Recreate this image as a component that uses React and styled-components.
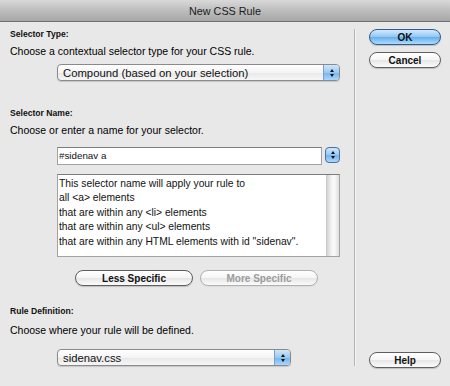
import React from "react"
import styled, { createGlobalStyle, css } from "styled-components"

const Global = createGlobalStyle`
	html, body {
		margin: 0;
		padding: 0;
		background: #e8e8e8;
	}
	body {
		font-family: "Liberation Sans", Arial, sans-serif;
		color: #000;
	}
`

const Window = styled.div`
	width: 450px;
	height: 386px;
	background: #e8e8e8;
	display: flex;
	flex-direction: column;
	overflow: hidden;
`

const TitleBar = styled.div`
	height: 21px;
	flex: none;
	background: linear-gradient(#d9d9d9, #bdbdbd 50%, #a7a7a7);
	border-bottom: 1px solid #707070;
	display: flex;
	align-items: center;
	justify-content: center;
	font-size: 10.8px;
	color: #1a1a1a;
`

const Body = styled.div`
	flex: 1;
	display: flex;
`

const Main = styled.div`
	width: 345px;
	padding: 6px 0 0 10px;
	box-sizing: border-box;
	display: flex;
	flex-direction: column;
`

const Label = styled.div`
	font-size: 8.6px;
	font-weight: bold;
	height: 12px;
	line-height: 12px;
	color: #111;
	margin-top: ${p => p.top || 0}px;
`

const Text = styled.div`
	font-size: 10.5px;
	height: 13px;
	line-height: 13px;
	margin-top: ${p => p.top || 0}px;
`

const Indented = styled.div`
	margin-left: 47px;
	width: ${p => p.w}px;
	margin-top: ${p => p.top || 0}px;
`

const PopUp = styled.div`
	height: 15px;
	border: 1px solid #8a8a8a;
	border-radius: 4px;
	background: linear-gradient(#ffffff, #f4f4f4 50%, #e8e8e8 51%, #f6f6f6);
	display: flex;
	align-items: center;
	box-shadow: 0 1px 1px rgba(0, 0, 0, 0.15);
	overflow: hidden;
`

const PopText = styled.span`
	flex: 1;
	padding-left: 5px;
	font-size: 11.3px;
	color: #111;
`

const Stepper = styled.span`
	width: 15px;
	align-self: stretch;
	background: linear-gradient(#cfe6fb, #97c9f3 50%, #72b3ef 51%, #acd6fb);
	border-left: 1px solid #7d9fc4;
	display: flex;
	flex-direction: column;
	align-items: center;
	justify-content: center;
	gap: 2px;
	${p => p.round && css`
		box-sizing: border-box;
		width: 15px;
		height: 16px;
		border: 1px solid #46729f;
		border-radius: 4px;
	`}
`

const Arrow = styled.span`
	width: 0;
	height: 0;
	border-left: 2.5px solid transparent;
	border-right: 2.5px solid transparent;
	${p => p.up
		? css`border-bottom: 3px solid #111;`
		: css`border-top: 3px solid #111;`}
`

const ComboRow = styled.div`
	display: flex;
	align-items: center;
	gap: 3px;
`

const Field = styled.div`
	flex: 1;
	height: 16px;
	border: 1px solid #a2a2a2;
	border-top-color: #7c7c7c;
	background: #fff;
	font-size: 9.8px;
	line-height: 16px;
	padding-left: 1px;
	color: #111;
`

const Area = styled.div`
	margin-top: 9px;
	height: 81px;
	border: 1px solid #a2a2a2;
	border-top-color: #7c7c7c;
	background: #fff;
	display: flex;
`

const AreaText = styled.div`
	flex: 1;
	padding: 2px 0 0 1px;
	font-size: 10.3px;
	line-height: 14.4px;
	white-space: pre;
	color: #111;
`

const ScrollTrack = styled.div`
	width: 12px;
	background: linear-gradient(90deg, #d4d4d4, #f4f4f4 40%, #fafafa 60%, #dedede);
	border-left: 1px solid #c8c8c8;
`

const ButtonRow = styled.div`
	display: flex;
	gap: 7px;
	margin: 13px 0 0 65px;
`

const Button = styled.div`
	width: ${p => p.w || 118}px;
	height: 16px;
	box-sizing: border-box;
	border: 1px solid ${p => (p.disabled ? "#b0b0b0" : "#5e5e5e")};
	border-radius: 9px;
	background: linear-gradient(#ffffff, #f5f5f5 50%, #e6e6e6 51%, #fbfbfb);
	display: flex;
	align-items: center;
	justify-content: center;
	font-size: 10px;
	font-weight: bold;
	color: ${p => (p.disabled ? "#9c9c9c" : "#111")};
	box-shadow: 0 1px 1px rgba(0, 0, 0, ${p => (p.disabled ? 0.05 : 0.18)});
	${p => p.primary && css`
		border-color: #35598a;
		background: linear-gradient(#d3eafd, #8fc6f4 50%, #64aeee 51%, #acdcfc);
	`}
`

const Divider = styled.div`
	width: 1px;
	background: #b4b4b4;
	border-right: 1px solid #f4f4f4;
	margin: 7px 0 20px 9px;
`

const Side = styled.div`
	flex: 1;
	padding: 7px 9px 0 13px;
	display: flex;
	flex-direction: column;
	gap: 7px;
`

const Spacer = styled.div`
	flex: 1;
`

const HelpSlot = styled.div`
	padding-bottom: 18px;
`

const lines = [
	"This selector name will apply your rule to",
	"all <a> elements",
	"that are within any <li> elements",
	"that are within any <ul> elements",
	'that are within any HTML elements with id "sidenav".',
].join("\n")

const Arrows = ({ round }) => (
	<Stepper round={round}>
		<Arrow up />
		<Arrow />
	</Stepper>
)

export default function App() {
	return (
		<Window>
			<Global />
			<TitleBar>New CSS Rule</TitleBar>
			<Body>
				<Main>
					<Label>Selector Type:</Label>
					<Text top={5}>Choose a contextual selector type for your CSS rule.</Text>
					<Indented w={283} top={6}>
						<PopUp>
							<PopText>Compound (based on your selection)</PopText>
							<Arrows />
						</PopUp>
					</Indented>
					<Label top={26}>Selector Name:</Label>
					<Text top={5}>Choose or enter a name for your selector.</Text>
					<Indented w={283} top={10}>
						<ComboRow>
							<Field>#sidenav a</Field>
							<Arrows round />
						</ComboRow>
						<Area>
							<AreaText>{lines}</AreaText>
							<ScrollTrack />
						</Area>
					</Indented>
					<ButtonRow>
						<Button>Less Specific</Button>
						<Button disabled>More Specific</Button>
					</ButtonRow>
					<Label top={19}>Rule Definition:</Label>
					<Text top={7}>Choose where your rule will be defined.</Text>
					<Indented w={234} top={12}>
						<PopUp>
							<PopText>sidenav.css</PopText>
							<Arrows />
						</PopUp>
					</Indented>
				</Main>
				<Divider />
				<Side>
					<Button w={72} primary>OK</Button>
					<Button w={72}>Cancel</Button>
					<Spacer />
					<HelpSlot>
						<Button w={72}>Help</Button>
					</HelpSlot>
				</Side>
			</Body>
		</Window>
	)
}
